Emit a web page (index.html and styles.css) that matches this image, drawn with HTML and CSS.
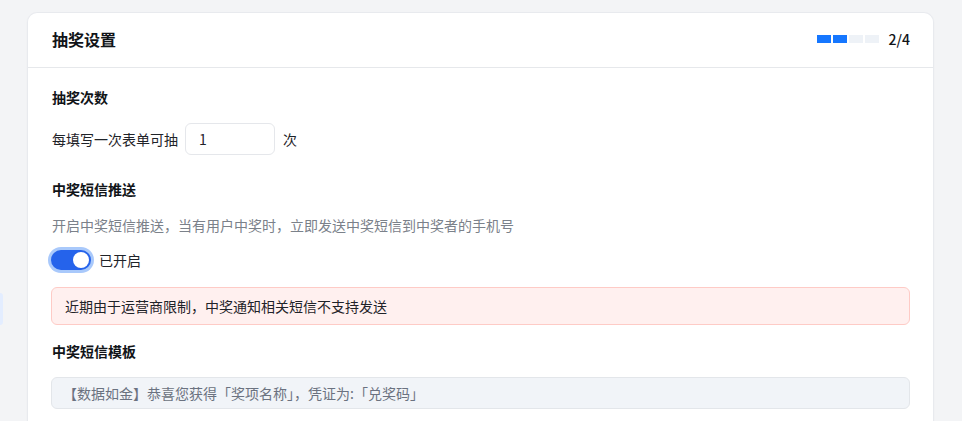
FILE: index.html
```html
<!DOCTYPE html>
<html lang="zh-CN">
<head>
<meta charset="utf-8">
<title>抽奖设置</title>
<link rel="stylesheet" href="styles.css">
</head>
<body>
<div class="page">
  <aside class="side"><div class="side-item"></div></aside>
  <main class="card">
    <header class="card-head">
      <h2 class="card-title">抽奖设置</h2>
      <div class="progress">
        <div class="steps">
          <span class="step on"></span><span class="step on"></span><span class="step"></span><span class="step"></span>
        </div>
        <span class="step-text">2/4</span>
      </div>
    </header>
    <div class="card-body">
      <section class="sec">
        <h3 class="sec-title">抽奖次数</h3>
        <div class="row">
          <span class="label">每填写一次表单可抽</span>
          <input class="num-input" type="text" value="1">
          <span class="label">次</span>
        </div>
      </section>
      <section class="sec sec-sms">
        <h3 class="sec-title">中奖短信推送</h3>
        <p class="desc">开启中奖短信推送，当有用户中奖时，立即发送中奖短信到中奖者的手机号</p>
        <div class="toggle-row">
          <span class="switch"><span class="knob"></span></span>
          <span class="label">已开启</span>
        </div>
        <div class="alert">近期由于运营商限制，中奖通知相关短信不支持发送</div>
      </section>
      <section class="sec sec-tpl">
        <h3 class="sec-title">中奖短信模板</h3>
        <div class="tpl">【数据如金】恭喜您获得「奖项名称」，凭证为:「兑奖码」</div>
      </section>
    </div>
  </main>
</div>
</body>
</html>
```

FILE: styles.css
```css
* { box-sizing: border-box; }
html, body { margin: 0; padding: 0; }
body {
  background: #f3f4f6;
  font-family: "Noto Sans CJK SC", "Noto Sans", sans-serif;
  color: #1f2329;
  height: 421px;
  overflow: hidden;
}
.page {
  display: flex;
  padding: 12px 28px 0 0;
  height: 421px;
}
.side {
  width: 27px;
  flex: none;
}
.side-item {
  margin-top: 281px;
  width: 3px;
  height: 32px;
  background: #e3edff;
  border-radius: 0 5px 5px 0;
}
.card {
  flex: 1;
  background: #fff;
  border: 1px solid #e8eaee;
  border-bottom: none;
  border-radius: 10px 10px 0 0;
  box-shadow: 0 1px 2px rgba(16, 24, 40, 0.04);
}
.card-head {
  height: 55px;
  display: flex;
  align-items: center;
  justify-content: space-between;
  padding: 0 23px 2px 24px;
  border-bottom: 1px solid #e6e8eb;
}
.card-title {
  margin: 0;
  font-size: 16px;
  font-weight: 700;
  line-height: 24px;
  color: #111418;
}
.progress {
  display: flex;
  align-items: center;
  gap: 10px;
}
.steps {
  display: flex;
  gap: 2px;
}
.step {
  width: 14px;
  height: 8px;
  background: #eef2f7;
}
.step.on { background: #1677ff; }
.step-text {
  font-size: 14px;
  font-weight: 500;
  color: #111418;
  line-height: 20px;
}
.card-body {
  padding: 18px 23px 0 23px;
}
.sec-title {
  margin: 0;
  font-size: 14px;
  font-weight: 700;
  line-height: 22px;
  color: #111418;
  padding-left: 1px;
}
.row {
  display: flex;
  align-items: center;
  margin-top: 15px;
  height: 32px;
}
.label {
  font-size: 14px;
  line-height: 22px;
  color: #1f2329;
}
.row .label:first-child { padding-left: 1px; }
.num-input {
  width: 90px;
  height: 32px;
  margin: 0 8px 0 7px;
  padding: 0 13px;
  border: 1px solid #e5e7eb;
  border-radius: 6px;
  font-family: "Noto Sans CJK SC", "Noto Sans", sans-serif;
  font-size: 14px;
  color: #1f2329;
  background: #fff;
  outline: none;
}
.sec-sms { margin-top: 23px; }
.desc {
  margin: 14px 0 0 0;
  padding-left: 1px;
  font-size: 14px;
  line-height: 22px;
  color: #7b818a;
}
.toggle-row {
  display: flex;
  align-items: center;
  gap: 8px;
  margin-top: 14px;
  height: 20px;
}
.switch {
  display: flex;
  align-items: center;
  justify-content: flex-end;
  width: 40px;
  height: 20px;
  margin-left: 0;
  padding: 0 2px;
  border-radius: 10px;
  background: #2563eb;
  box-shadow: 0 0 0 3px #a9c9fb;
}
.knob {
  width: 16px;
  height: 16px;
  border-radius: 50%;
  background: #fff;
}
.alert {
  margin-top: 17px;
  height: 38px;
  display: flex;
  align-items: center;
  padding: 0 13px;
  background: #fff0ef;
  border: 1px solid #fecbc6;
  border-radius: 6px;
  font-size: 14px;
  color: #1f2329;
}
.sec-tpl { margin-top: 15px; }
.tpl {
  margin-top: 15px;
  height: 32px;
  display: flex;
  align-items: center;
  padding: 0 11px;
  background: #f1f4f8;
  border: 1px solid #e3e6ea;
  border-radius: 6px;
  font-size: 14px;
  color: #6b7280;
}
```
